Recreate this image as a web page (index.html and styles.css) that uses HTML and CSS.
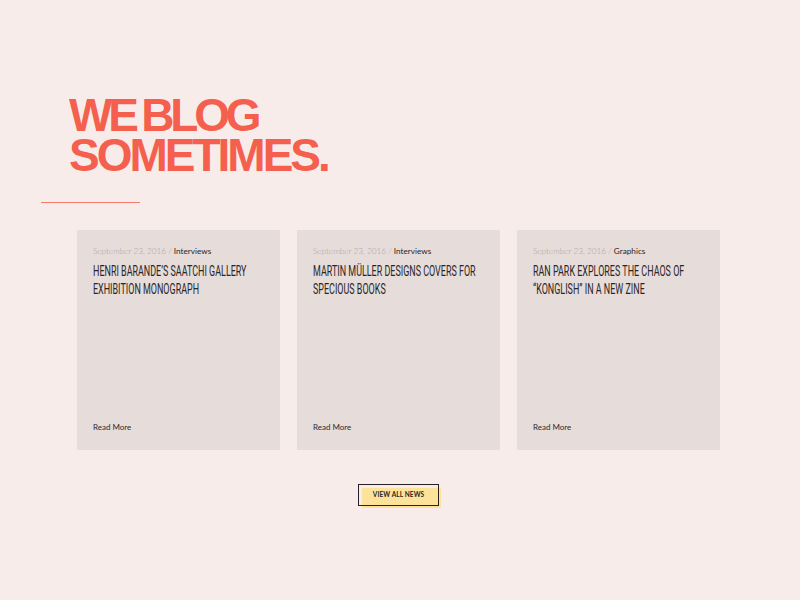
FILE: index.html
```html
<!DOCTYPE html>
<html lang="en">
<head>
<meta charset="utf-8">
<title>We Blog Sometimes</title>
<link rel="stylesheet" href="styles.css">
</head>
<body>
<main class="page">
  <h1 class="title"><span class="title-line title-line--first">WE BLOG</span><span class="title-line">SOMETIMES.</span></h1>
  <div class="rule"></div>
  <section class="posts">
    <article class="card">
      <p class="meta"><span class="date">September 23, 2016 /</span> <span class="cat">Interviews</span></p>
      <h2 class="post-title">Henri Barande’s Saatchi Gallery Exhibition Monograph</h2>
      <a class="more" href="#">Read More</a>
    </article>
    <article class="card">
      <p class="meta"><span class="date">September 23, 2016 /</span> <span class="cat">Interviews</span></p>
      <h2 class="post-title">Martin Müller Designs Covers for Specious Books</h2>
      <a class="more" href="#">Read More</a>
    </article>
    <article class="card">
      <p class="meta"><span class="date">September 23, 2016 /</span> <span class="cat">Graphics</span></p>
      <h2 class="post-title">Ran Park Explores the Chaos of “Konglish” in a New Zine</h2>
      <a class="more" href="#">Read More</a>
    </article>
  </section>
  <div class="actions">
    <a class="btn" href="#"><span class="btn-label">VIEW ALL NEWS</span></a>
  </div>
</main>
</body>
</html>
```

FILE: styles.css
```css
html, body {
  margin: 0;
  padding: 0;
  background: #f7ecea;
}
body {
  font-family: "Lato", "Liberation Sans", sans-serif;
  color: #222;
}
.page {
  width: 800px;
  height: 600px;
  padding-top: 95px;
  box-sizing: border-box;
}
.title {
  margin: 0 0 0 69px;
  font-family: "Liberation Sans", Arial, sans-serif;
  font-weight: 700;
  font-size: 46px;
  line-height: 40px;
  letter-spacing: -3px;
  color: #f45f4e;
}
.title-line {
  display: block;
}
.title-line--first {
  letter-spacing: -4.2px;
  word-spacing: -2px;
}
.rule {
  margin: 27px 0 0 41px;
  width: 99px;
  height: 1px;
  background: #f47a6b;
}
.posts {
  margin: 27px 0 0 77px;
  display: grid;
  grid-template-columns: repeat(3, 203px);
  column-gap: 17px;
  width: 643px;
}
.card {
  background: #e6dcda;
  height: 220px;
  box-sizing: border-box;
  padding: 15px 16px 18px;
  display: flex;
  flex-direction: column;
  overflow: hidden;
}
.meta {
  margin: 0;
  font-size: 8.2px;
  line-height: 12px;
}
.date {
  color: #aaa09e;
  font-weight: 300;
}
.cat {
  color: #2a2524;
}
.post-title {
  margin: 5px 0 0;
  width: 268px;
  transform: scaleX(0.64);
  transform-origin: left top;
  font-family: "Roboto", "Liberation Sans", sans-serif;
  font-weight: 400;
  font-size: 14px;
  line-height: 18px;
  text-transform: uppercase;
  color: #2b2626;
}
.more {
  margin-top: auto;
  font-size: 8px;
  line-height: 10px;
  color: #2f2a29;
  text-decoration: none;
}
.actions {
  width: 643px;
  margin: 34px 0 0 77px;
  display: flex;
  justify-content: center;
}
.btn {
  position: relative;
  z-index: 0;
  display: block;
  width: 81px;
  height: 22px;
  text-decoration: none;
}
.btn::before {
  content: "";
  position: absolute;
  left: 4px;
  top: 4px;
  right: -2px;
  bottom: -2px;
  background: #fde39a;
  z-index: -1;
}
.btn::after {
  content: "";
  position: absolute;
  inset: 0;
  border: 1.5px solid #262222;
}
.btn-label {
  display: block;
  text-align: center;
  font-size: 6.5px;
  line-height: 22px;
  font-weight: 700;
  color: #2a2626;
  letter-spacing: 0.1px;
}
```
